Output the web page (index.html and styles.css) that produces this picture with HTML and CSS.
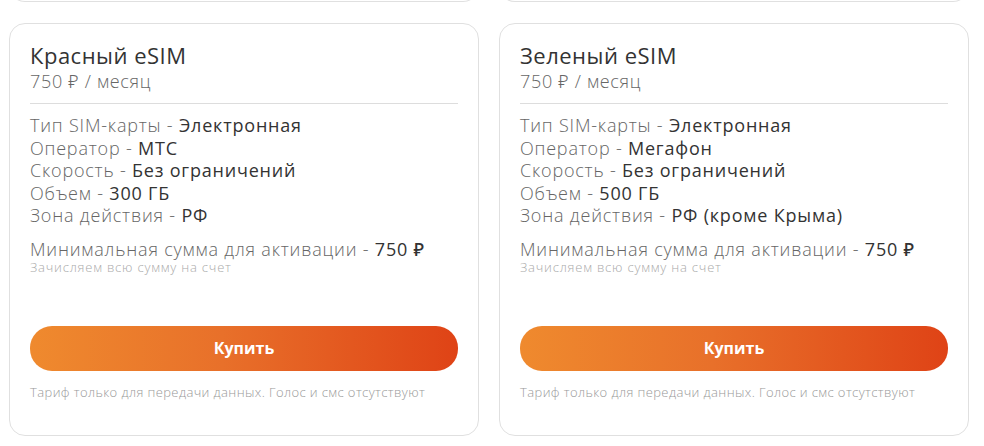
FILE: index.html
```html
<!DOCTYPE html>
<html lang="ru">
<head>
  <meta charset="UTF-8" />
  <meta name="viewport" content="width=device-width, initial-scale=1.0"/>
  <title>eSIM тарифы</title>
  <link rel="stylesheet" href="styles.css">
</head>
<body>
  <div class="tariffs">
    <div class="card_tail"></div>
    <div class="card_tail"></div>

    <div class="card">
      <div class="card_name">Красный eSIM</div>
      <div class="card_price">750 ₽ / месяц</div>
      <div class="card_specs">
        <div>Тип SIM-карты - <b>Электронная</b></div>
        <div>Оператор - <b>МТС</b></div>
        <div>Скорость - <b>Без ограничений</b></div>
        <div>Объем - <b>300 ГБ</b></div>
        <div>Зона действия - <b>РФ</b></div>
      </div>
      <div class="card_min">Минимальная сумма для активации - <b>750 ₽</b></div>
      <div class="card_hint">Зачисляем всю сумму на счет</div>
      <button class="buy_btn">Купить</button>
      <div class="card_note">Тариф только для передачи данных. Голос и смс отсутствуют</div>
    </div>

    <div class="card">
      <div class="card_name">Зеленый eSIM</div>
      <div class="card_price">750 ₽ / месяц</div>
      <div class="card_specs">
        <div>Тип SIM-карты - <b>Электронная</b></div>
        <div>Оператор - <b>Мегафон</b></div>
        <div>Скорость - <b>Без ограничений</b></div>
        <div>Объем - <b>500 ГБ</b></div>
        <div>Зона действия - <b>РФ (кроме Крыма)</b></div>
      </div>
      <div class="card_min">Минимальная сумма для активации - <b>750 ₽</b></div>
      <div class="card_hint">Зачисляем всю сумму на счет</div>
      <button class="buy_btn">Купить</button>
      <div class="card_note">Тариф только для передачи данных. Голос и смс отсутствуют</div>
    </div>
  </div>
</body>
</html>
```

FILE: styles.css
```css
body {
  margin: 0;
  background-color: #fff;
  font-family: "Open Sans", "Noto Sans", sans-serif;
  font-weight: 300;
  color: #666;
}

.tariffs {
  display: grid;
  grid-template-columns: 470px 470px;
  column-gap: 20px;
  row-gap: 21px;
  padding-left: 9px;
}

.card_tail {
  height: 16px;
  margin-top: -15px;
  border: 1px solid #e0e0e0;
  border-top: none;
  border-radius: 0 0 16px 16px;
}

.card {
  height: 413px;
  box-sizing: border-box;
  border: 1px solid #e0e0e0;
  border-radius: 16px;
  padding: 17px 20px 0 20px;
  display: flex;
  flex-direction: column;
}

.card b {
  font-weight: 500;
  color: #333;
}

.card_name {
  font-size: 22px;
  line-height: 28px;
  font-weight: 400;
  letter-spacing: 0.5px;
  color: #333;
}

.card_price {
  font-size: 18px;
  line-height: 25px;
  letter-spacing: 0.7px;
  color: #666;
  padding-bottom: 9px;
  border-bottom: 1px solid #ddd;
}

.card_specs {
  margin-top: 10px;
  font-size: 18px;
  line-height: 22.5px;
  letter-spacing: 0.8px;
}

.card_min {
  margin-top: 12px;
  font-size: 18px;
  line-height: 21px;
  letter-spacing: 0.8px;
}

.card_hint {
  font-size: 13px;
  line-height: 15px;
  letter-spacing: 0.8px;
  color: #aaa;
}

.buy_btn {
  margin-top: 51px;
  height: 45px;
  border: none;
  border-radius: 22px;
  background: linear-gradient(90deg, #ef8a2e 0%, #e8702a 45%, #df4316 100%);
  color: #fff;
  font-family: "Open Sans", "Noto Sans", sans-serif;
  font-weight: 700;
  font-size: 16px;
  cursor: pointer;
}

.card_note {
  margin-top: 13px;
  font-size: 13px;
  line-height: 16px;
  letter-spacing: 0.4px;
  color: #999;
}
```
